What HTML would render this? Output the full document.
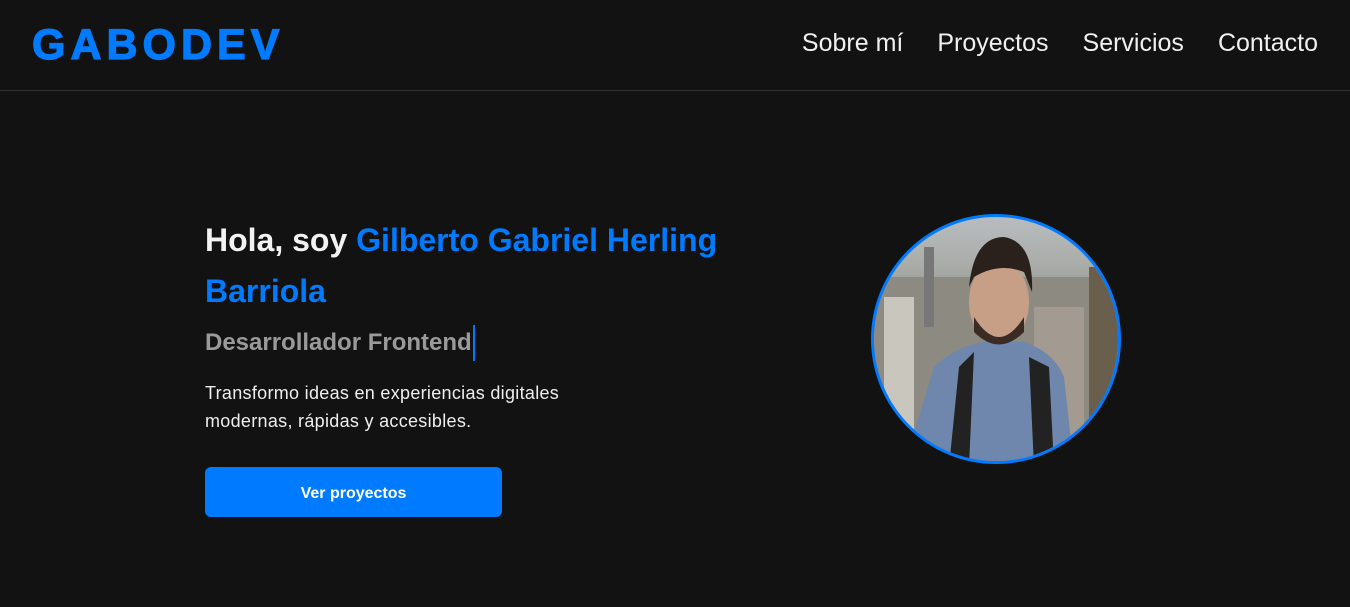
<!DOCTYPE html>
<html><head><meta charset="utf-8"><style>
*{margin:0;padding:0;box-sizing:border-box}
body{width:1350px;height:607px;background:#121212;font-family:"Liberation Sans",sans-serif;overflow:hidden;position:relative;color:#fff}
header{position:absolute;left:0;top:0;width:1350px;height:91px;border-bottom:1px solid #333}
.logo{position:absolute;left:32px;top:21px;font-size:43px;font-weight:bold;color:#007bff;letter-spacing:5px;-webkit-text-stroke:1.2px #007bff}
nav{position:absolute;right:32px;top:29px;font-size:25px}
nav span{margin-left:34px;color:#f0f0f0}
h1{position:absolute;left:205px;top:215px;font-size:32px;line-height:51px;width:580px;font-weight:bold;color:#f2f2f2}
h1 b{color:#007bff}
.sub{position:absolute;left:205px;top:325px;font-size:24px;font-weight:bold;color:#9a9a9a;border-right:2px solid #007bff;padding-right:1px;line-height:36px}
p{position:absolute;left:205px;top:379px;font-size:18px;line-height:28px;color:#eee;width:420px;letter-spacing:0.3px}
.btn{position:absolute;left:205px;top:467px;width:297px;height:50px;background:#007bff;border-radius:6px;color:#fff;font-weight:bold;font-size:16px;text-align:center;line-height:53px}
.pic{position:absolute;left:871px;top:214px;width:250px;height:250px;border-radius:50%;border:3px solid #007bff;overflow:hidden;
background:linear-gradient(180deg,#b9bcbf 0%,#a9aca8 20%,#8f8e86 40%,#9a978f 60%,#7f7c76 100%)}
</style></head><body>
<header><div class="logo">GABODEV</div>
<nav><span>Sobre mí</span><span>Proyectos</span><span>Servicios</span><span>Contacto</span></nav></header>
<h1>Hola, soy <b>Gilberto Gabriel Herling Barriola</b></h1>
<div class="sub">Desarrollador Frontend</div>
<p>Transformo ideas en experiencias digitales modernas, rápidas y accesibles.</p>
<div class="btn">Ver proyectos</div>
<div class="pic"><svg width="250" height="250" viewBox="0 0 250 250">
<rect x="0" y="60" width="250" height="190" fill="#8d8a82"/>
<rect x="10" y="80" width="30" height="170" fill="#c9c6bd"/>
<rect x="50" y="30" width="10" height="80" fill="#777"/>
<rect x="160" y="90" width="50" height="160" fill="#a39b92"/>
<rect x="215" y="50" width="35" height="200" fill="#6a5e4c"/>
<path d="M30 250 L60 150 Q80 130 110 125 L150 125 Q180 135 190 160 L200 250Z" fill="#6f86ad"/>
<path d="M75 250 L85 150 L100 135 L95 250Z M160 250 L155 140 L175 150 L180 250Z" fill="#222"/>
<ellipse cx="125" cy="85" rx="30" ry="42" fill="#c79f86"/>
<path d="M95 70 Q100 20 130 20 Q160 25 158 75 L150 55 Q125 45 100 60Z" fill="#2a211c"/>
<path d="M100 100 Q125 140 150 100 L150 115 Q125 140 100 115Z" fill="#3a2c24"/>
</svg></div>
</body></html>
